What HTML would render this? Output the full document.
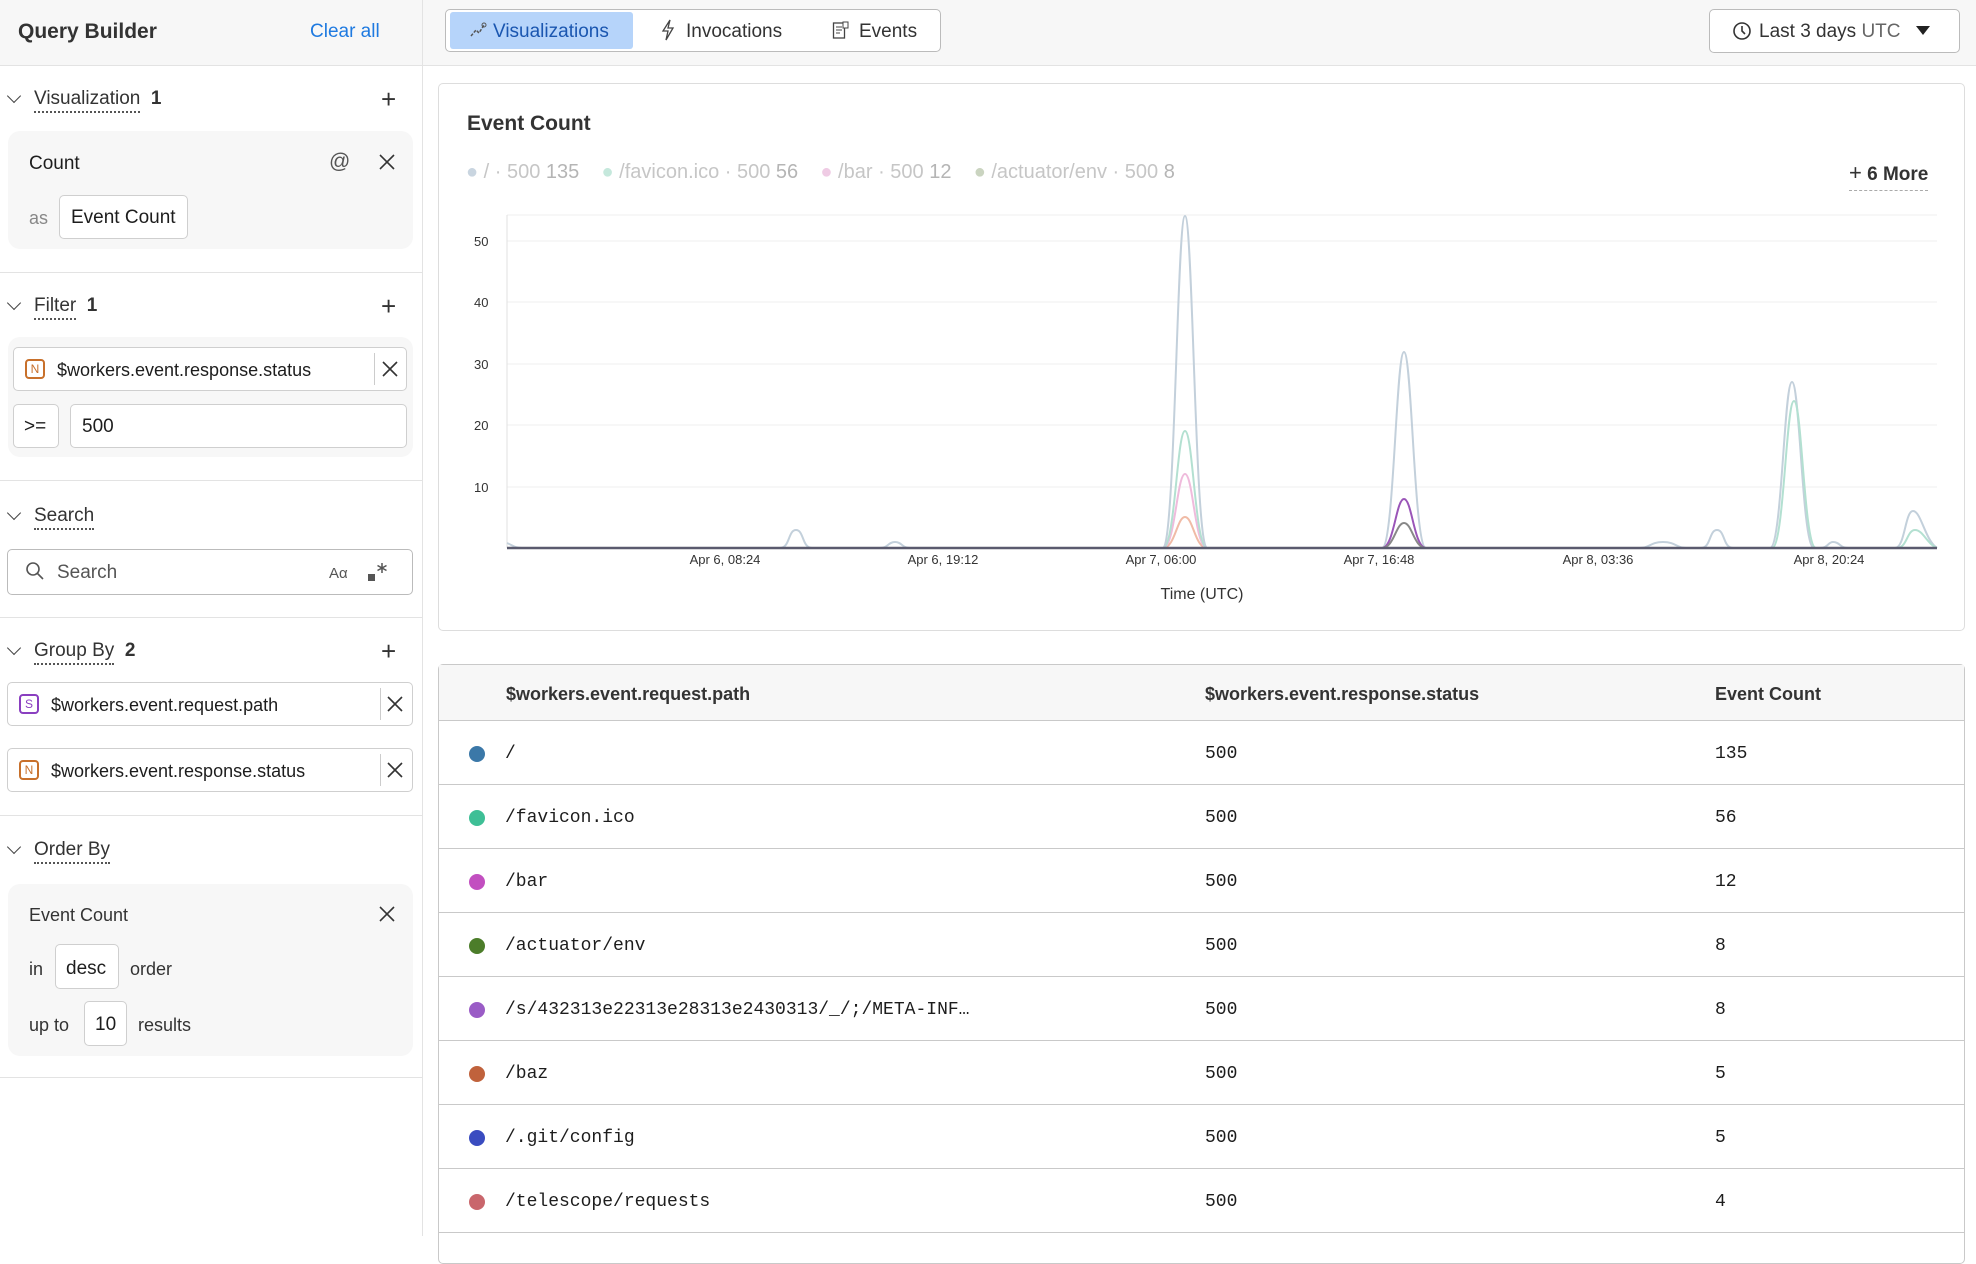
<!DOCTYPE html>
<html><head><meta charset="utf-8"><style>
*{box-sizing:border-box;margin:0;padding:0}
body{width:1976px;height:1236px;overflow:hidden;background:#fff;font-family:"Liberation Sans",sans-serif;color:#1d1d1d;position:relative}
.a{position:absolute}
.hd{font-size:19px;color:#333}
.u{border-bottom:2px dotted #555;padding-bottom:2px}
.chev{position:absolute;left:9px;width:10px;height:10px;border-right:1.6px solid #444;border-bottom:1.6px solid #444;transform:rotate(45deg)}
.plus{position:absolute;left:381px;font-size:26px;font-weight:300;color:#333;line-height:1}
.card{position:absolute;left:8px;width:405px;background:#f7f7f7;border-radius:12px}
.box{position:absolute;background:#fff;border:1px solid #cfcfcf;border-radius:5px}
.x{position:absolute;width:18px;height:18px}
.dv{position:absolute;left:0;width:422px;height:1px;background:#e3e3e3}
.badge{position:absolute;width:20px;height:20px;border:2px solid;border-radius:4px;font-size:12px;text-align:center;line-height:17px}
.row{position:absolute;left:439px;width:1526px;height:64px;border-bottom:1px solid #c9c9c9;font-family:"Liberation Mono",monospace;font-size:18px}
.row span{position:absolute;top:23px}
.dot{position:absolute;left:30px;top:25px;width:16px;height:16px;border-radius:50%}
</style></head><body>
<div class="a" style="left:0;top:0;width:1976px;height:66px;background:#f7f7f7;border-bottom:1px solid #e3e3e3"></div>
<div class="a" style="left:422px;top:0;width:1px;height:1236px;background:#e3e3e3"></div>
<div class="a" style="left:18px;top:20px;font-size:21px;font-weight:bold;color:#333">Query Builder</div>
<div class="a" style="left:310px;top:21px;font-size:19px;color:#1f7ae0">Clear all</div>

<svg width="0" height="0" style="position:absolute"><defs><g id="xx"><path d="M2 2L16 16M16 2L2 16" stroke="#333" stroke-width="1.6"/></g></defs></svg>

<div class="chev" style="top:91px"></div>
<div class="a hd" style="left:34px;top:88px"><span class="u">Visualization</span>&nbsp;&nbsp;<b>1</b></div>
<div class="plus" style="top:86px">+</div>
<div class="card" style="top:131px;height:118px"></div>
<div class="a" style="left:29px;top:153px;font-size:19px">Count</div>
<div class="a" style="left:329px;top:150px;font-size:21px;color:#555">@</div>
<svg class="x" style="left:378px;top:153px"><use href="#xx"/></svg>
<div class="a" style="left:29px;top:208px;font-size:18px;color:#888">as</div>
<div class="box" style="left:59px;top:195px;width:129px;height:44px"></div>
<div class="a" style="left:71px;top:207px;font-size:19px">Event Count</div>
<div class="dv" style="top:272px"></div>

<div class="chev" style="top:298px"></div>
<div class="a hd" style="left:34px;top:295px"><span class="u">Filter</span>&nbsp;&nbsp;<b>1</b></div>
<div class="plus" style="top:293px">+</div>
<div class="card" style="top:337px;height:120px"></div>
<div class="box" style="left:13px;top:347px;width:394px;height:44px"></div>
<div class="badge" style="left:25px;top:359px;border-color:#c8702b;color:#c8702b">N</div>
<div class="a" style="left:57px;top:360px;font-size:18px">$workers.event.response.status</div>
<div class="a" style="left:374px;top:353px;width:1px;height:32px;background:#ccc"></div>
<svg class="x" style="left:381px;top:360px"><use href="#xx"/></svg>
<div class="box" style="left:13px;top:404px;width:46px;height:44px"></div>
<div class="a" style="left:24px;top:416px;font-size:19px">&gt;=</div>
<div class="box" style="left:70px;top:404px;width:337px;height:44px"></div>
<div class="a" style="left:82px;top:416px;font-size:19px">500</div>
<div class="dv" style="top:480px"></div>

<div class="chev" style="top:508px"></div>
<div class="a hd" style="left:34px;top:505px"><span class="u">Search</span></div>
<div class="box" style="left:7px;top:549px;width:406px;height:46px;border-color:#bbb"></div>
<svg class="a" style="left:25px;top:561px" width="20" height="20"><circle cx="8" cy="8" r="6" fill="none" stroke="#555" stroke-width="1.6"/><path d="M12.5 12.5L18 18" stroke="#555" stroke-width="1.6"/></svg>
<div class="a" style="left:57px;top:562px;font-size:19px;color:#555">Search</div>
<div class="a" style="left:329px;top:565px;font-size:15px;color:#555">Aα</div>
<svg class="a" style="left:366px;top:560px" width="24" height="24"><rect x="2" y="14" width="7" height="7" fill="#555"/><path d="M16 3v10M11.5 5.5l9 5M20.5 5.5l-9 5" stroke="#555" stroke-width="1.5"/></svg>
<div class="dv" style="top:617px"></div>

<div class="chev" style="top:643px"></div>
<div class="a hd" style="left:34px;top:640px"><span class="u">Group By</span>&nbsp;&nbsp;<b>2</b></div>
<div class="plus" style="top:638px">+</div>
<div class="box" style="left:7px;top:682px;width:406px;height:44px"></div>
<div class="badge" style="left:19px;top:694px;border-color:#8a3fc0;color:#8a3fc0">S</div>
<div class="a" style="left:51px;top:695px;font-size:18px">$workers.event.request.path</div>
<div class="a" style="left:380px;top:688px;width:1px;height:32px;background:#ccc"></div>
<svg class="x" style="left:386px;top:695px"><use href="#xx"/></svg>
<div class="box" style="left:7px;top:748px;width:406px;height:44px"></div>
<div class="badge" style="left:19px;top:760px;border-color:#c8702b;color:#c8702b">N</div>
<div class="a" style="left:51px;top:761px;font-size:18px">$workers.event.response.status</div>
<div class="a" style="left:380px;top:754px;width:1px;height:32px;background:#ccc"></div>
<svg class="x" style="left:386px;top:761px"><use href="#xx"/></svg>
<div class="dv" style="top:815px"></div>

<div class="chev" style="top:842px"></div>
<div class="a hd" style="left:34px;top:839px"><span class="u">Order By</span></div>
<div class="card" style="top:884px;height:172px"></div>
<div class="a" style="left:29px;top:905px;font-size:18px;color:#333">Event Count</div>
<svg class="x" style="left:378px;top:905px"><use href="#xx"/></svg>
<div class="a" style="left:29px;top:959px;font-size:18px;color:#333">in</div>
<div class="box" style="left:55px;top:944px;width:64px;height:45px"></div>
<div class="a" style="left:66px;top:958px;font-size:19px">desc</div>
<div class="a" style="left:130px;top:959px;font-size:18px;color:#333">order</div>
<div class="a" style="left:29px;top:1015px;font-size:18px;color:#333">up to</div>
<div class="box" style="left:84px;top:1001px;width:43px;height:45px"></div>
<div class="a" style="left:95px;top:1014px;font-size:19px">10</div>
<div class="a" style="left:138px;top:1015px;font-size:18px;color:#333">results</div>
<div class="dv" style="top:1077px"></div>

<!-- top bar -->
<div class="a" style="left:445px;top:9px;width:496px;height:43px;border:1px solid #bbb;border-radius:5px;background:#fff"></div>
<div class="a" style="left:450px;top:12px;width:183px;height:37px;background:#b6d4fa;border-radius:3px"></div>
<svg class="a" style="left:469px;top:21px" width="18" height="18"><path d="M2 15 L7 9 L10 12 L15 4" fill="none" stroke="#555" stroke-width="1.5" stroke-dasharray="3 1.5"/><circle cx="15" cy="4" r="2" fill="none" stroke="#555"/></svg>
<div class="a" style="left:493px;top:21px;font-size:19px;color:#1a56b0">Visualizations</div>
<svg class="a" style="left:661px;top:19px" width="14" height="22"><path d="M9 1 L2 12 L7 12 L5 21 L12 9 L7 9 Z" fill="none" stroke="#444" stroke-width="1.3"/></svg>
<div class="a" style="left:686px;top:21px;font-size:19px;color:#333">Invocations</div>
<svg class="a" style="left:832px;top:21px" width="18" height="19"><rect x="1.5" y="2" width="11" height="15" fill="none" stroke="#444" stroke-width="1.3"/><path d="M4 6h6M4 9h6M4 12h4" stroke="#444"/><rect x="11" y="1" width="5" height="6" fill="#fff" stroke="#444"/></svg>
<div class="a" style="left:859px;top:21px;font-size:19px;color:#333">Events</div>

<div class="a" style="left:1709px;top:9px;width:251px;height:44px;border:1px solid #bbb;border-radius:5px;background:#fff"></div>
<svg class="a" style="left:1732px;top:21px" width="20" height="20"><circle cx="10" cy="10" r="8" fill="none" stroke="#333" stroke-width="1.6"/><path d="M10 5v5l3 3" fill="none" stroke="#333" stroke-width="1.6"/></svg>
<div class="a" style="left:1759px;top:21px;font-size:19px;color:#333">Last 3 days <span style="color:#666">UTC</span></div>
<svg class="a" style="left:1916px;top:26px" width="14" height="10"><path d="M0 0h14L7 9z" fill="#222"/></svg>

<!-- chart card -->
<div class="a" style="left:438px;top:83px;width:1527px;height:548px;border:1px solid #ddd;border-radius:5px"></div>
<div class="a" style="left:467px;top:112px;font-size:21px;font-weight:bold;color:#333">Event Count</div>
<div class="a" style="left:466px;top:161px;font-size:20px;color:#c6c6c6;white-space:pre"><span style="color:#c9d5e0">●</span> / · 500 <span style="color:#b5b5b5">135</span>    <span style="color:#c5e8dc">●</span> /favicon.ico · 500 <span style="color:#b5b5b5">56</span>    <span style="color:#efcbe4">●</span> /bar · 500 <span style="color:#b5b5b5">12</span>    <span style="color:#cad4c0">●</span> /actuator/env · 500 <span style="color:#b5b5b5">8</span></div>
<div class="a" style="left:1849px;top:160px;font-size:19px;font-weight:bold;color:#333;border-bottom:1px dashed #aaa;padding-bottom:4px"><span style="font-weight:300;font-size:22px">+</span> 6 More</div>

<svg class="a" style="left:0;top:0" width="1976" height="640">
<g stroke="#efefef" stroke-width="1">
<line x1="507" y1="215" x2="1937" y2="215"/><line x1="507" y1="241" x2="1937" y2="241"/><line x1="507" y1="302" x2="1937" y2="302"/><line x1="507" y1="364" x2="1937" y2="364"/><line x1="507" y1="425" x2="1937" y2="425"/><line x1="507" y1="487" x2="1937" y2="487"/>
</g>
<line x1="507" y1="215" x2="507" y2="548" stroke="#e2e2e2"/>
<g font-family="Liberation Sans" font-size="13" fill="#333">
<text x="474" y="246">50</text><text x="474" y="307">40</text><text x="474" y="369">30</text><text x="474" y="430">20</text><text x="474" y="492">10</text>
<text x="725" y="564" text-anchor="middle">Apr 6, 08:24</text><text x="943" y="564" text-anchor="middle">Apr 6, 19:12</text><text x="1161" y="564" text-anchor="middle">Apr 7, 06:00</text><text x="1379" y="564" text-anchor="middle">Apr 7, 16:48</text><text x="1598" y="564" text-anchor="middle">Apr 8, 03:36</text><text x="1829" y="564" text-anchor="middle">Apr 8, 20:24</text>
<text x="1202" y="599" text-anchor="middle" font-size="16">Time (UTC)</text>
</g>
<g fill="none" stroke-width="2">
<path stroke="#f0bba6" d="M1163 548C1175 548 1177 517 1185 517C1193 517 1195 548 1207 548"/>
<path stroke="#efbbdc" d="M1163 548C1175 548 1177 474 1185 474C1193 474 1195 548 1207 548"/>
<path stroke="#b3e0d1" d="M1163 548C1175 548 1177 431 1185 431C1193 431 1195 548 1207 548"/>
<path stroke="#c3d0db" d="M1163 548C1175 548 1177 216 1185 216C1193 216 1195 548 1207 548"/>
<path stroke="#c3d0db" d="M1382 548C1394 548 1396 352 1404 352C1412 352 1414 548 1426 548"/>
<path stroke="#9a55b8" d="M1382 548C1394 548 1396 499 1404 499C1412 499 1414 548 1426 548"/>
<path stroke="#888" d="M1382 548C1394 548 1396 523 1404 523C1412 523 1414 548 1426 548"/>
<path stroke="#c3d0db" d="M1770 548C1782 548 1784 382 1792 382C1800 382 1802 548 1814 548"/>
<path stroke="#b3e0d1" d="M1772 548C1784 548 1786 401 1794 401C1802 401 1804 548 1816 548"/>
<path stroke="#c3d0db" d="M780 548C790 548 788 530 796 530C804 530 802 548 812 548"/>
<path stroke="#c3d0db" d="M880 548C888 548 888 542 895 542C902 542 902 548 910 548"/>
<path stroke="#c3d0db" d="M1640 548C1650 548 1650 542 1663 542C1676 542 1676 548 1686 548"/>
<path stroke="#c3d0db" d="M1701 548C1711 548 1709 530 1717 530C1725 530 1723 548 1733 548"/>
<path stroke="#c3d0db" d="M1820 548C1828 548 1828 542 1833 542C1840 542 1840 548 1848 548"/>
<path stroke="#c3d0db" d="M1895 548C1905 548 1905 511 1913 511C1921 511 1925 540 1937 548"/>
<path stroke="#b3e0d1" d="M1897 548C1907 548 1907 530 1915 530C1923 530 1927 544 1937 548"/>
<path stroke="#c3d0db" d="M507 543C512 545 515 548 522 548"/>
</g>
<line x1="507" y1="548" x2="1937" y2="548" stroke="#5a5a6e" stroke-width="2.5"/>
</svg>

<!-- table -->
<div class="a" style="left:438px;top:664px;width:1527px;height:600px;border:1px solid #c9c9c9;border-radius:5px"></div>
<div class="a" style="left:439px;top:665px;width:1525px;height:56px;background:#f7f7f7;border-bottom:1px solid #c9c9c9;font-size:18px;font-weight:bold;color:#333">
<span class="a" style="left:67px;top:19px">$workers.event.request.path</span>
<span class="a" style="left:766px;top:19px">$workers.event.response.status</span>
<span class="a" style="left:1276px;top:19px">Event Count</span></div>
<div class="row" style="top:721px"><i class="dot" style="background:#3b78a8"></i><span style="left:66px">/</span><span style="left:766px">500</span><span style="left:1276px">135</span></div>
<div class="row" style="top:785px"><i class="dot" style="background:#3ebf96"></i><span style="left:66px">/favicon.ico</span><span style="left:766px">500</span><span style="left:1276px">56</span></div>
<div class="row" style="top:849px"><i class="dot" style="background:#c24fc0"></i><span style="left:66px">/bar</span><span style="left:766px">500</span><span style="left:1276px">12</span></div>
<div class="row" style="top:913px"><i class="dot" style="background:#4c7d2a"></i><span style="left:66px">/actuator/env</span><span style="left:766px">500</span><span style="left:1276px">8</span></div>
<div class="row" style="top:977px"><i class="dot" style="background:#9a5cc6"></i><span style="left:66px">/s/432313e22313e28313e2430313/_/;/META-INF…</span><span style="left:766px">500</span><span style="left:1276px">8</span></div>
<div class="row" style="top:1041px"><i class="dot" style="background:#c0623c"></i><span style="left:66px">/baz</span><span style="left:766px">500</span><span style="left:1276px">5</span></div>
<div class="row" style="top:1105px"><i class="dot" style="background:#3a4cc0"></i><span style="left:66px">/.git/config</span><span style="left:766px">500</span><span style="left:1276px">5</span></div>
<div class="row" style="top:1169px"><i class="dot" style="background:#c9666c"></i><span style="left:66px">/telescope/requests</span><span style="left:766px">500</span><span style="left:1276px">4</span></div>
</body></html>
